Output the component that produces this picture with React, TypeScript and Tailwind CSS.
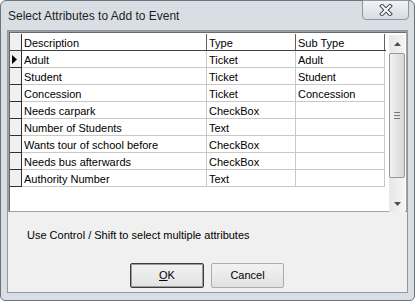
import React from "react";

const rows: [string, string, string][] = [
  ["Adult", "Ticket", "Adult"],
  ["Student", "Ticket", "Student"],
  ["Concession", "Ticket", "Concession"],
  ["Needs carpark", "CheckBox", ""],
  ["Number of Students", "Text", ""],
  ["Wants tour of school before", "CheckBox", ""],
  ["Needs bus afterwards", "CheckBox", ""],
  ["Authority Number", "Text", ""],
];

const CloseGlyph = () => (
  <svg width="14" height="12" viewBox="0 0 14 12">
    <path d="M3 2 L11 10 M11 2 L3 10" stroke="#3c4650" strokeWidth="4" strokeLinecap="square" fill="none" />
    <path d="M3 2 L11 10 M11 2 L3 10" stroke="#ffffff" strokeWidth="2" strokeLinecap="square" fill="none" />
  </svg>
);

const ScrollBar = () => (
  <div className="w-[16px] h-[177px] mt-[1px] flex flex-col bg-gradient-to-r from-[#e7e7e7] to-[#f4f4f4]">
    <div className="h-[17px] flex items-center justify-center">
      <svg width="7" height="4" viewBox="0 0 7 4">
        <path d="M0 4 L3.5 0 L7 4 Z" fill="#4d4d4d" />
      </svg>
    </div>
    <div className="h-[125px] mt-[1px] rounded-[2px] border border-[#979797] bg-gradient-to-r from-[#f2f2f2] to-[#d8d8d8] flex flex-col items-center justify-center gap-[2px]">
      <div className="w-[6px] h-[1px] bg-[#7a7a7a]" />
      <div className="w-[6px] h-[1px] bg-[#7a7a7a]" />
      <div className="w-[6px] h-[1px] bg-[#7a7a7a]" />
    </div>
    <div className="flex-1" />
    <div className="h-[17px] flex items-center justify-center">
      <svg width="7" height="4" viewBox="0 0 7 4">
        <path d="M0 0 L3.5 4 L7 0 Z" fill="#4d4d4d" />
      </svg>
    </div>
  </div>
);

export default function App() {
  return (
    <div className="w-[415px] h-[301px] bg-white">
      <div className="w-[415px] h-[301px] flex flex-col rounded-t-[6px] rounded-b-[5px] border border-[#6b737c] bg-[#d9dee4] font-['Liberation_Sans',Arial,sans-serif] text-black">
        <div className="h-[29px] flex items-start">
          <div className="pl-[7px] pt-[8px] text-[12px] leading-[15px] text-[#1e1e1e]">
            Select Attributes to Add to Event
          </div>
          <div className="ml-auto mr-[5px] w-[47px] h-[20px] mt-[-1px] rounded-b-[4px] border border-[#8e97a1] bg-gradient-to-b from-[#f2f4f6] to-[#d6dbe1] flex items-center justify-center">
            <CloseGlyph />
          </div>
        </div>
        <div className="mx-[6px] h-[263px] border border-[#8f98a2] bg-[#f0f0f0] flex flex-col">
          <div className="h-[181px] border border-[#a0a0a0] bg-white shadow-[inset_1px_1px_0_#696969] flex pt-[2px] pl-[1px]">
            <div className="w-[376px] flex flex-col text-[11px] leading-[13px]">
              <div className="flex h-[17px] border-b border-[#404040]">
                <div className="w-[12px] bg-[#f0f0f0] border-r border-[#303030]" />
                <div className="w-[185px] pl-[2px] pt-[3px] border-r border-[#606060]">Description</div>
                <div className="w-[89px] pl-[2px] pt-[3px] border-r border-[#606060]">Type</div>
                <div className="w-[89px] pl-[2px] pt-[3px] border-r border-[#606060]">Sub Type</div>
              </div>
              {rows.map((r, i) => (
                <div key={i} className="flex h-[17px]">
                  <div className="w-[12px] bg-[#f0f0f0] border-r border-b border-[#303030] flex items-center pl-[2px]">
                    {i === 0 && (
                      <svg width="5" height="9" viewBox="0 0 5 9">
                        <path d="M0 0 L5 4.5 L0 9 Z" fill="#000" />
                      </svg>
                    )}
                  </div>
                  <div className="w-[185px] pl-[2px] pt-[3px] border-r border-b border-[#c8c8c8]">{r[0]}</div>
                  <div className="w-[89px] pl-[2px] pt-[3px] border-r border-b border-[#c8c8c8]">{r[1]}</div>
                  <div className="w-[89px] pl-[2px] pt-[3px] border-r border-b border-[#c8c8c8]">{r[2]}</div>
                </div>
              ))}
            </div>
            <div className="flex-1" />
            <ScrollBar />
            <div className="w-[1px]" />
          </div>
          <div className="pl-[19px] pt-[17px] text-[11px] leading-[13px]">
            Use Control / Shift to select multiple attributes
          </div>
          <div className="flex gap-[7px] ml-[122px] mt-[21px] text-[11px]">
            <button className="w-[74px] h-[25px] rounded-[2px] border border-[#3c3c3c] shadow-[inset_0_0_0_1px_#9a9a9a] bg-gradient-to-b from-[#f2f2f2] to-[#e2e2e2] flex items-center justify-center">
              <span><span className="underline">O</span>K</span>
            </button>
            <button className="w-[73px] h-[25px] rounded-[2px] border border-[#acacac] bg-gradient-to-b from-[#f2f2f2] to-[#e2e2e2] flex items-center justify-center">
              Cancel
            </button>
          </div>
        </div>
      </div>
    </div>
  );
}
